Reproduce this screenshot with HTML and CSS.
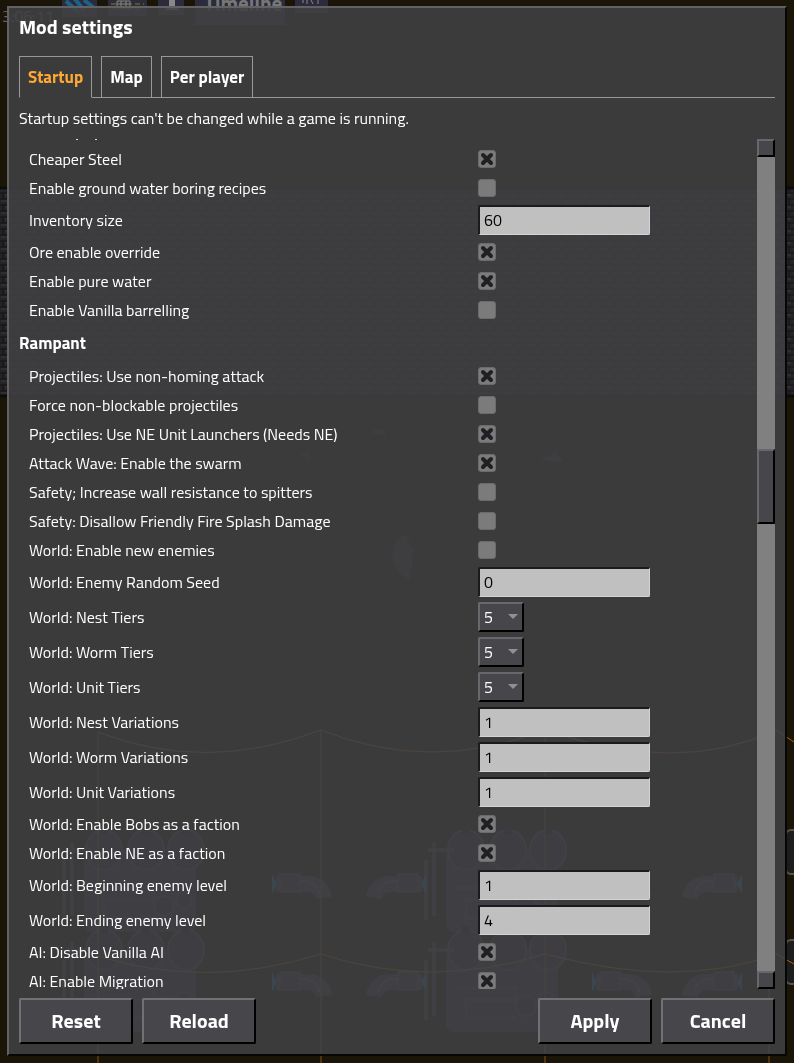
FILE: index.html
```html
<!DOCTYPE html>
<html lang="en">
<head>
    <meta charset="UTF-8">
    <meta name="viewport" content="width=device-width, initial-scale=1.0">
    <title>Mod settings</title>
    <link rel="stylesheet" href="styles.css">
</head>
<body>
    <!-- game world behind the window -->
    <svg class="scene" viewBox="0 0 794 1063" preserveAspectRatio="xMidYMin slice" aria-hidden="true">
        <defs>
            <pattern id="bricks" width="12" height="12" patternUnits="userSpaceOnUse">
                <rect width="12" height="12" fill="#252325"/>
                <path d="M0 1h12M0 7h12M3 1v6M9 7v5" stroke="#111012" fill="none"/>
                <path d="M5 3h6M1 9h6" stroke="#38363a" fill="none"/>
            </pattern>
            <g id="pipe">
                <path d="M0 20Q2 6 18 6H48" stroke="#3a3a40" stroke-width="16" fill="none"/>
                <path d="M4 16Q8 3 20 3H46" stroke="#55555c" stroke-width="2" fill="none"/>
                <rect x="24" y="-4" width="20" height="18" fill="#35353a" stroke="#55555c"/>
                <path d="M52-4v20l-5-10z" fill="#0b7196"/>
            </g>
            <g id="plant">
                <rect x="0" y="20" width="112" height="82" rx="8" fill="#34343c"/>
                <g fill="#2e2e35" stroke="#46464e" stroke-width="2">
                    <ellipse cx="20" cy="20" rx="18" ry="20"/>
                    <ellipse cx="62" cy="20" rx="18" ry="20"/>
                    <ellipse cx="102" cy="20" rx="18" ry="20"/>
                    <circle cx="80" cy="76" r="10"/>
                    <circle cx="100" cy="70" r="8"/>
                </g>
                <path d="M16-4h8v8h-8zM58-4h8v8h-8zM98-4h8v8h-8z" fill="#1d1d24"/>
                <path d="M-12 12v74M-18 20h26M10 58h60v12H20v18h50M-20 30v60" stroke="#46464e" stroke-width="3" fill="none"/>
            </g>
        </defs>
        <rect width="794" height="1063" fill="#1a1507"/>
        <rect y="188" width="794" height="208" fill="url(#bricks)"/>
        <path d="M0 188h794M0 396h794" stroke="#0c0b0c" stroke-width="3"/>
        <g fill="#2c2b3b">
            <rect x="62" y="-4" width="35" height="21"/>
            <rect x="108" y="-4" width="39" height="20"/>
            <rect x="158" y="-4" width="26" height="19"/>
            <rect x="195" y="-4" width="90" height="29"/>
            <rect x="295" y="-4" width="33" height="17"/>
        </g>
        <path d="M66 1l12 11M74-2l10 12M84 0l9 7" stroke="#1d6286" stroke-width="4"/>
        <path d="M111 4h33M111 9h33" stroke="#8c7b12" stroke-dasharray="5 3"/>
        <path d="M117 1h13v7h-13zM121 1v7M126 1v7M117 4h13" stroke="#888" fill="#333"/>
        <path d="M169 0h6v6l4 4h-14l4-4z" fill="#888"/>
        <path d="M303 0v3M307 0v4M311 0l2 4M318 0v4" stroke="#888"/>
        <text class="scene-title" x="204" y="11">Timeline</text>
        <text class="scene-clock" x="2" y="22">3:06:11</text>
        <g fill="#39364b">
            <path d="M396 540l9-6 8 16-3 30-12-8-6-14zM300 455l8-5 2 10zM540 460l16-8 7 10zM370 432l12-4 5 9z" opacity=".6"/>
        </g>
        <use href="#plant" x="84" y="830"/>
        <use href="#plant" x="446" y="830"/>
        <use href="#plant" x="84" y="930"/>
        <use href="#plant" x="446" y="930"/>
        <use href="#pipe" x="374" y="878"/>
        <use href="#pipe" x="690" y="878"/>
        <use href="#pipe" x="374" y="976"/>
        <use href="#pipe" x="690" y="976"/>
        <use href="#pipe" transform="matrix(-1 0 0 1 324 878)"/>
        <use href="#pipe" transform="matrix(-1 0 0 1 324 976)"/>
        <use href="#pipe" transform="matrix(-1 0 0 1 644 878)"/>
        <use href="#pipe" transform="matrix(-1 0 0 1 644 976)"/>
        <g fill="#1d1d1c" stroke="#57554e" stroke-width="2">
            <rect x="786" y="830" width="12" height="44" rx="5"/>
            <rect x="786" y="940" width="12" height="44" rx="5"/>
        </g>
        <path d="M98 732Q206 774 321 730Q430 774 545 730Q680 776 776 730L794 742M98 956Q206 990 321 954Q430 990 545 954Q680 990 776 954L794 964" stroke="#a8630c" fill="none"/>
        <path d="M98 732v331M321 730v333M545 730v333M769 730v333" stroke="#8a500c" fill="none"/>
    </svg>

    <form class="window">
        <h1>Mod settings</h1>

        <div class="tabs">
            <button type="button" class="tab active">Startup</button>
            <span class="tab-line"></span>
            <button type="button" class="tab">Map</button>
            <span class="tab-line"></span>
            <button type="button" class="tab">Per player</button>
            <span class="tab-line rest"></span>
        </div>

        <p class="note">Startup settings can't be changed while a game is running.</p>

        <div class="content">
            <div class="settings">
                <!-- tail of the row scrolled out at the top -->
                <svg class="cut-row" viewBox="0 0 100 5" aria-hidden="true"><path d="M57 0h2v1h-2zM76 0h2v1h-2z" fill="#ddd"/></svg>
                <div class="row"><label for="steel">Cheaper Steel</label><input type="checkbox" id="steel" checked></div>
                <div class="row"><label for="boring">Enable ground water boring recipes</label><input type="checkbox" id="boring"></div>
                <div class="row field"><label for="inventory">Inventory size</label><input type="text" id="inventory" value="60"></div>
                <div class="row"><label for="ore">Ore enable override</label><input type="checkbox" id="ore" checked></div>
                <div class="row"><label for="pure">Enable pure water</label><input type="checkbox" id="pure" checked></div>
                <div class="row"><label for="barrel">Enable Vanilla barrelling</label><input type="checkbox" id="barrel"></div>

                <h2>Rampant</h2>
                <div class="row"><label for="homing">Projectiles: Use non-homing attack</label><input type="checkbox" id="homing" checked></div>
                <div class="row"><label for="force">Force non-blockable projectiles</label><input type="checkbox" id="force"></div>
                <div class="row"><label for="launchers">Projectiles: Use NE Unit Launchers (Needs NE)</label><input type="checkbox" id="launchers" checked></div>
                <div class="row"><label for="swarm">Attack Wave: Enable the swarm</label><input type="checkbox" id="swarm" checked></div>
                <div class="row"><label for="wall">Safety; Increase wall resistance to spitters</label><input type="checkbox" id="wall"></div>
                <div class="row"><label for="splash">Safety: Disallow Friendly Fire Splash Damage</label><input type="checkbox" id="splash"></div>
                <div class="row"><label for="enemies">World: Enable new enemies</label><input type="checkbox" id="enemies"></div>
                <div class="row field"><label for="seed">World: Enemy Random Seed</label><input type="text" id="seed" value="0"></div>
                <div class="row field"><label for="nest-tiers">World: Nest Tiers</label><select id="nest-tiers"><option>5</option></select></div>
                <div class="row field"><label for="worm-tiers">World: Worm Tiers</label><select id="worm-tiers"><option>5</option></select></div>
                <div class="row field"><label for="unit-tiers">World: Unit Tiers</label><select id="unit-tiers"><option>5</option></select></div>
                <div class="row field"><label for="nest-var">World: Nest Variations</label><input type="text" id="nest-var" value="1"></div>
                <div class="row field"><label for="worm-var">World: Worm Variations</label><input type="text" id="worm-var" value="1"></div>
                <div class="row field"><label for="unit-var">World: Unit Variations</label><input type="text" id="unit-var" value="1"></div>
                <div class="row"><label for="bobs">World: Enable Bobs as a faction</label><input type="checkbox" id="bobs" checked></div>
                <div class="row"><label for="ne">World: Enable NE as a faction</label><input type="checkbox" id="ne" checked></div>
                <div class="row field"><label for="begin">World: Beginning enemy level</label><input type="text" id="begin" value="1"></div>
                <div class="row field"><label for="end">World: Ending enemy level</label><input type="text" id="end" value="4"></div>
                <div class="row"><label for="vanilla">AI: Disable Vanilla AI</label><input type="checkbox" id="vanilla" checked></div>
                <div class="row"><label for="migration">AI: Enable Migration</label><input type="checkbox" id="migration" checked></div>
            </div>

            <div class="scrollbar">
                <button type="button" class="scroll-button" aria-label="Scroll up"></button>
                <div class="track"><div class="thumb"></div></div>
                <button type="button" class="scroll-button" aria-label="Scroll down"></button>
            </div>
        </div>

        <div class="actions">
            <button type="button">Reset</button>
            <button type="button">Reload</button>
            <span class="spacer"></span>
            <button type="button">Apply</button>
            <button type="button">Cancel</button>
        </div>
    </form>
</body>
</html>
```

FILE: styles.css
```css
* {
    box-sizing: border-box;
}

body {
    margin: 0;
    height: 100vh;
    display: flex;
    overflow: hidden;
    background-color: #1a1507;
    color: #fff;
    font-family: "Titillium Web", Roboto, sans-serif;
    font-size: 16px;
    line-height: 20px;
}

button, input, select {
    font: inherit;
    color: inherit;
    margin: 0;
}

.scene {
    position: fixed;
    inset: 0;
    width: 100%;
    height: 100%;
}

.scene-title {
    font-size: 21px;
    font-weight: bold;
    fill: #777;
}

.scene-clock {
    font-size: 16px;
    fill: #666;
}

.window {
    position: relative;
    flex: 1;
    display: flex;
    flex-direction: column;
    margin: 6px 7px 7px;
    padding: 0 10px 10px;
    background-color: rgba(65, 65, 68, 0.88);
    border: 2px solid #060606;
    border-top-color: #626264;
    border-left-color: #626264;
}

h1 {
    margin: 0;
    font-size: 20px;
    line-height: 38px;
}

/* tabs */
.tabs {
    display: flex;
    flex: none;
    height: 42px;
    margin-top: 10px;
}

.tab {
    padding: 0 8px;
    background: none;
    border: 1px solid #999;
    font-size: 17px;
    font-weight: bold;
}

.tab.active {
    color: #ffa833;
    border-bottom-color: transparent;
}

.tab-line {
    width: 9px;
    border-bottom: 1px solid #999;
}

.tab-line.rest {
    flex: 1;
}

.note {
    margin: 10px 0 11px;
}

/* settings list */
.content {
    flex: 1;
    min-height: 0;
    display: flex;
}

.settings {
    flex: 1;
    overflow: hidden;
}

.cut-row {
    display: block;
    width: 100px;
    height: 5px;
}

.row {
    display: grid;
    grid-template-columns: 449px 1fr;
    align-items: center;
    height: 29px;
    padding-left: 10px;
}

.row.field {
    height: 35px;
}

h2 {
    margin: 0;
    padding-top: 2px;
    font-size: 17px;
    line-height: 35px;
}

input[type="checkbox"] {
    appearance: none;
    width: 18px;
    height: 18px;
    background-color: #7b7b7b;
    border: 1px solid #6b6b6b;
    border-radius: 3px;
}

input[type="checkbox"]:checked {
    background-image: url("data:image/svg+xml,%3Csvg xmlns='http://www.w3.org/2000/svg' viewBox='0 0 16 16'%3E%3Cpath d='M4 4l8 8M12 4l-8 8' stroke='%23202024' stroke-width='4' stroke-linecap='round'/%3E%3C/svg%3E");
}

input[type="text"] {
    width: 172px;
    height: 30px;
    padding: 0 4px;
    color: #000;
    background-color: #c0c0c0;
    border: 2px solid #1c1a1c;
    border-right: 1px solid #d4d4d4;
    border-bottom: 1px solid #d4d4d4;
    border-radius: 2px;
}

select {
    appearance: none;
    width: 46px;
    height: 30px;
    padding: 0 4px;
    background: #47464b url("data:image/svg+xml,%3Csvg xmlns='http://www.w3.org/2000/svg' viewBox='0 0 10 5'%3E%3Cpath d='M0 0h10L5 5z' fill='%23919194'/%3E%3C/svg%3E") no-repeat right 4px center / 10px 5px;
    border: 2px solid #000;
    border-top-color: #68676d;
    border-left-color: #68676d;
    border-radius: 2px;
}

/* scrollbar */
.scrollbar {
    display: flex;
    flex-direction: column;
    width: 18px;
}

.track {
    flex: 1;
    padding-top: 292px;
    background-color: #808080;
}

.scroll-button, .thumb {
    height: 18px;
    padding: 0;
    background-color: #47464b;
    border: 2px solid #000;
    border-top-color: #68676d;
    border-left-color: #68676d;
}

.thumb {
    height: 75px;
}

/* bottom buttons */
.actions {
    display: flex;
    flex: none;
    gap: 9px;
    margin-top: 9px;
}

.actions button {
    width: 114px;
    height: 46px;
    background-color: #47464b;
    border: 2px solid #000;
    border-top-color: #717075;
    border-left-color: #717075;
    border-radius: 2px;
    font-size: 20px;
    font-weight: bold;
}

.spacer {
    flex: 1;
}
```
